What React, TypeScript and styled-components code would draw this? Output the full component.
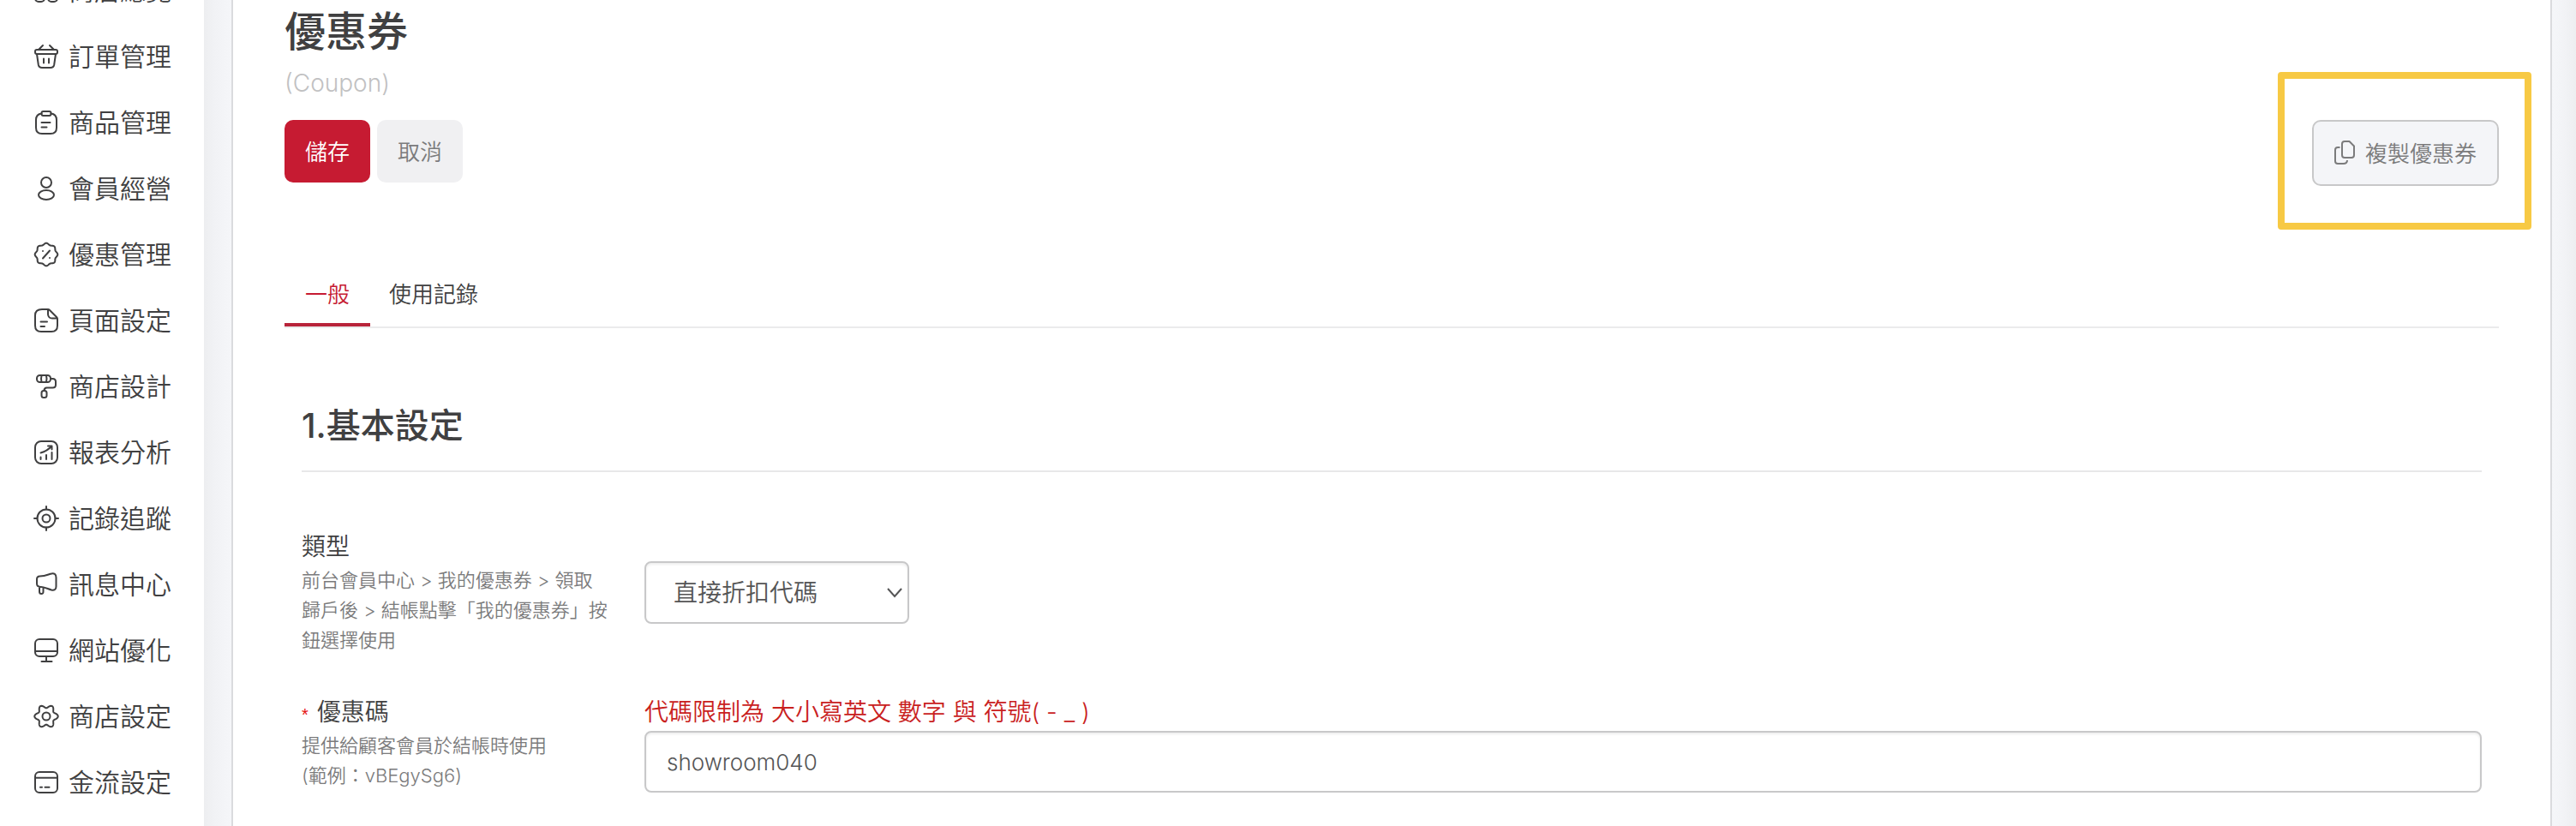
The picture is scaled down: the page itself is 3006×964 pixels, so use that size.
import React, { useState } from 'react';
import styled, { createGlobalStyle } from 'styled-components';

const color = {
  ink: '#404041',
  muted: '#7b7b7c',
  faint: '#c1c1c2',
  brand: '#c61b32',
  warn: '#c9211e',
  line: '#e8e8e9',
  field: '#c8c8c9',
  wash: '#f4f5f8',
  highlight: '#f7c944',
};

const GlobalStyle = createGlobalStyle`
  *, *::before, *::after { box-sizing: border-box; }
  body {
    margin: 0;
    background: #fff;
    color: ${color.ink};
    font-family: Inter, "Noto Sans CJK TC", sans-serif;
    font-size: 28px;
    font-weight: 350;
  }
  button, input, select { font-family: inherit; font-weight: inherit; }
`;

/* Closed wavy outline with evenly spaced lobes, centred in a 28 unit box. */
const lobed = (lobes: number, mean: number, amplitude: number) => {
  const points = Array.from({ length: 120 }, (_, i) => {
    const a = (i / 120) * Math.PI * 2;
    const r = mean + amplitude * Math.cos(lobes * a);
    return `${(14 + r * Math.cos(a)).toFixed(2)} ${(14 + r * Math.sin(a)).toFixed(2)}`;
  });
  return `M${points.join('L')}Z`;
};

const icons: Record<string, React.ReactNode> = {
  overview: (
    <>
      <rect x="1" y="1" width="11" height="11" rx="4" />
      <rect x="16" y="1" width="11" height="11" rx="4" />
      <rect x="1" y="16" width="11" height="11" rx="4" />
      <rect x="16" y="16" width="11" height="11" rx="4" />
    </>
  ),
  basket: (
    <>
      <rect x="1" y="6" width="26" height="5" rx="2" />
      <path d="M3 11l1.800 12.500Q5.500 27 9 27H19Q22.500 27 23.200 23.500L25 11M10 1L5 6M18 1L23 6M11 16.500V21.500M17 16.500V21.500" />
    </>
  ),
  clipboard: (
    <>
      <path d="M8.500 3.500C4 4 2 6 2 11V20Q2 27 9 27H19Q26 27 26 20V11C26 6 24 4 19.500 3.500" />
      <rect x="8.500" y="1" width="11" height="5" rx="2" />
      <path d="M8.500 14H18.500M8.500 19.500H14.500" />
    </>
  ),
  member: (
    <>
      <circle cx="14" cy="7" r="6" />
      <ellipse cx="14" cy="21.500" rx="9" ry="5.500" />
    </>
  ),
  discount: (
    <>
      <path d={lobed(8, 12.4, 0.9)} />
      <path d="M10 18.500L18 9.500M10 10V10.100M18 18V18.100" />
    </>
  ),
  page: (
    <path d="M16 1H9Q1 1 1 8V20Q1 27 8 27H20Q27 27 27 20V12.500Q27 11 26 10L18 2Q17 1 16 1V7Q16.500 11.500 21 11.500H27M7.500 15.500H15M7.500 21H12" />
  ),
  roller: (
    <>
      <rect x="3" y="1" width="16" height="8" rx="3.500" />
      <path d="M8.500 1.500Q7.500 5 8.500 8.500M14 1.500Q15 5 14 8.500M19 5H21.500Q25 5 25 8.500V12Q25 15.500 21.500 15.500H14.500Q11.500 15.500 11.500 19" />
      <rect x="8.500" y="19" width="6" height="8" rx="2.500" />
    </>
  ),
  report: (
    <>
      <rect x="1" y="1" width="26" height="26" rx="7" />
      <path d="M7.500 19.500V22M14 17V22M20.500 14V22M7.500 14.500Q15 12.500 20.500 6.500M16 6.500H20.500V10.500" />
    </>
  ),
  tracking: (
    <>
      <circle cx="14" cy="14" r="10.500" />
      <circle cx="14" cy="14" r="4.500" />
      <path d="M14 0V3.500M14 24.500V28M0 14H3.500M24.500 14H28" />
    </>
  ),
  message: (
    <path d="M3 8Q3 4.500 6.500 4.500C12.500 4.500 15 3 19 1.700Q25.500 0 25.500 6V16.500Q25.500 21.500 20 20.500C15 19 12 17 6.500 16.800Q3 16.500 3 13ZM6 17V22.500Q6 25 8.300 25T10.500 22.500V18" />
  ),
  website: (
    <>
      <rect x="1" y="1" width="26" height="20" rx="5" />
      <path d="M1 15H27M14 21V27M8.500 27H20.500" />
    </>
  ),
  settings: (
    <>
      <path d={lobed(6, 11.7, 2)} />
      <circle cx="14" cy="14" r="4.500" />
    </>
  ),
  payment: (
    <>
      <rect x="1" y="2" width="26" height="24" rx="5" />
      <path d="M1 8.700H27M7 19.700H9M12.500 19.700H17.500" />
    </>
  ),
};

const menu = [
  { icon: 'overview', label: '商店總覽' },
  { icon: 'basket', label: '訂單管理' },
  { icon: 'clipboard', label: '商品管理' },
  { icon: 'member', label: '會員經營' },
  { icon: 'discount', label: '優惠管理' },
  { icon: 'page', label: '頁面設定' },
  { icon: 'roller', label: '商店設計' },
  { icon: 'report', label: '報表分析' },
  { icon: 'tracking', label: '記錄追蹤' },
  { icon: 'message', label: '訊息中心' },
  { icon: 'website', label: '網站優化' },
  { icon: 'settings', label: '商店設定' },
  { icon: 'payment', label: '金流設定' },
];

const Shell = styled.div`
  display: flex;
  height: 100vh;
  overflow: hidden;
  background: ${color.wash};
`;

const Sidebar = styled.nav`
  flex: none;
  width: 238px;
  background: #fff;
`;

const MenuList = styled.ul`
  list-style: none;
  margin: -50px 0 0;
  padding: 0;
`;

const MenuLink = styled.a`
  display: flex;
  align-items: center;
  gap: 12px;
  height: 77px;
  padding-left: 40px;
  color: ${color.ink};
  font-size: 30px;
  line-height: 40px;
  text-decoration: none;
  white-space: nowrap;
`;

const MenuIcon = styled.svg`
  flex: none;
  width: 28px;
  height: 28px;
  overflow: visible;
  fill: none;
  stroke: currentColor;
  stroke-width: 2;
  stroke-linecap: round;
  stroke-linejoin: round;
`;

const Gutter = styled.div<{ $side: 'left' | 'right' }>`
  flex: none;
  width: ${(p) => (p.$side === 'left' ? 32 : 28)}px;
  background: linear-gradient(
    to ${(p) => (p.$side === 'left' ? 'right' : 'left')},
    #edeef0,
    #f1f2f5 40%,
    #f5f6f9
  );
`;

const Panel = styled.main`
  flex: 1;
  min-width: 0;
  padding: 9px 60px 0;
  background: #fff;
  border: solid #dadbde;
  border-width: 0 2px;
`;

const Title = styled.h1`
  margin: 0;
  font-size: 48px;
  font-weight: 500;
  line-height: 56px;
`;

const Subtitle = styled.p`
  margin: 14px 0 25px;
  color: ${color.faint};
  font-size: 28px;
  line-height: 36px;
`;

const Toolbar = styled.div`
  display: flex;
  align-items: flex-start;
  justify-content: space-between;
`;

const ButtonGroup = styled.div`
  display: flex;
  gap: 8px;
`;

const Button = styled.button<{ $primary?: boolean }>`
  height: 73px;
  padding: 0 24px 2px;
  border: 0;
  border-radius: 10px;
  background: ${(p) => (p.$primary ? color.brand : '#f0f0f2')};
  color: ${(p) => (p.$primary ? '#fff' : color.muted)};
  font-size: 26px;
`;

const CopyButton = styled.button`
  display: flex;
  align-items: center;
  gap: 12px;
  height: 77px;
  padding: 0 24px 2px;
  border: 2px solid ${color.field};
  border-radius: 10px;
  background: ${color.wash};
  color: ${color.muted};
  font-size: 26px;
`;

const CopyIcon = styled.svg`
  width: 24px;
  height: 28px;
  fill: none;
  stroke: currentColor;
  stroke-width: 2;
  stroke-linejoin: round;
`;

const Callout = styled.div`
  position: relative;

  &::after {
    content: '';
    position: absolute;
    inset: -56px -38px -51px -40px;
    border: 8px solid ${color.highlight};
    border-radius: 4px;
    pointer-events: none;
  }
`;

const Tabs = styled.div`
  display: flex;
  margin-top: 107px;
  border-bottom: 2px solid #ebebec;
`;

const Tab = styled.button<{ $active: boolean }>`
  min-width: 100px;
  padding: 0 22px 13px;
  border: 0;
  border-bottom: 4px solid ${(p) => (p.$active ? '#b8243a' : 'transparent')};
  background: none;
  color: ${(p) => (p.$active ? color.brand : color.ink)};
  font-size: 26px;
  line-height: 40px;
`;

const Section = styled.section`
  padding: 84px 20px 0;
`;

const SectionTitle = styled.h2`
  margin: 0 0 65px;
  padding-bottom: 22px;
  border-bottom: 2px solid ${color.line};
  font-size: 40px;
  font-weight: 500;
  line-height: 60px;
`;

const Field = styled.div`
  display: flex;
  align-items: flex-start;
  margin-bottom: 44px;
`;

const FieldText = styled.div`
  flex: none;
  width: 400px;
  padding-right: 40px;
`;

const Label = styled.label`
  display: block;
  font-size: 28px;
  line-height: 44px;
`;

const Required = styled.span`
  margin-right: 10px;
  color: #e60f0f;
  font-family: "Liberation Sans", Arial, sans-serif;
  font-size: 20px;
  line-height: 20px;
`;

const Hint = styled.p`
  margin: 0;
  color: ${color.muted};
  font-size: 22px;
  line-height: 35px;
  white-space: pre-line;
`;

const Control = styled.div<{ $offset?: boolean }>`
  flex: 1;
  min-width: 0;
  padding-top: ${(p) => (p.$offset ? 39 : 0)}px;
`;

const Notice = styled.p`
  margin: 0;
  color: ${color.warn};
  font-size: 28px;
  line-height: 44px;
`;

const SelectBox = styled.div`
  position: relative;
  width: 309px;
`;

const Select = styled.select`
  appearance: none;
  width: 100%;
  height: 73px;
  padding: 0 32px;
  border: 2px solid ${color.field};
  border-radius: 8px;
  background: #fff;
  box-shadow: inset 0 2px 3px rgba(0, 0, 0, 0.07);
  color: #555556;
  font-size: 28px;
`;

const Chevron = styled.svg`
  position: absolute;
  top: 31px;
  right: 8px;
  width: 18px;
  height: 12px;
  fill: none;
  stroke: #555556;
  stroke-width: 2;
  pointer-events: none;
`;

const TextInput = styled.input`
  display: block;
  width: 100%;
  height: 72px;
  padding: 0 24px;
  border: 2px solid ${color.field};
  border-radius: 8px;
  background: #fff;
  box-shadow: inset 0 2px 3px rgba(0, 0, 0, 0.07);
  color: #555556;
  font-size: 26px;
`;

export default function App() {
  const [tab, setTab] = useState(0);
  const [code, setCode] = useState('showroom040');

  return (
    <>
      <GlobalStyle />
      <Shell lang="zh-Hant">
        <Sidebar>
          <MenuList>
            {menu.map((item) => (
              <li key={item.label}>
                <MenuLink href="#">
                  <MenuIcon viewBox="0 0 28 28" aria-hidden="true">
                    {icons[item.icon]}
                  </MenuIcon>
                  {item.label}
                </MenuLink>
              </li>
            ))}
          </MenuList>
        </Sidebar>
        <Gutter $side="left" />
        <Panel>
          <Title>優惠券</Title>
          <Subtitle>(Coupon)</Subtitle>
          <Toolbar>
            <ButtonGroup>
              <Button type="button" $primary>
                儲存
              </Button>
              <Button type="button">取消</Button>
            </ButtonGroup>
            <Callout>
              <CopyButton type="button">
                <CopyIcon viewBox="0 0 24 28" aria-hidden="true">
                  <path d="M12 1H17.500L23 6.500V17Q23 20 20 20H12Q9 20 9 17V4Q9 1 12 1ZM6.500 8H4Q1 8 1 11V24Q1 27 4 27H10.500Q15 27 15 23" />
                </CopyIcon>
                複製優惠券
              </CopyButton>
            </Callout>
          </Toolbar>
          <Tabs role="tablist">
            {['一般', '使用記錄'].map((name, i) => (
              <Tab
                key={name}
                type="button"
                role="tab"
                aria-selected={tab === i}
                $active={tab === i}
                onClick={() => setTab(i)}
              >
                {name}
              </Tab>
            ))}
          </Tabs>
          <Section>
            <SectionTitle>1.基本設定</SectionTitle>
            <Field>
              <FieldText>
                <Label htmlFor="coupon-type">類型</Label>
                <Hint>
                  {'前台會員中心 > 我的優惠券 > 領取\n歸戶後 > 結帳點擊「我的優惠券」按\n鈕選擇使用'}
                </Hint>
              </FieldText>
              <Control $offset>
                <SelectBox>
                  <Select id="coupon-type">
                    <option>直接折扣代碼</option>
                  </Select>
                  <Chevron viewBox="0 0 18 12" aria-hidden="true">
                    <path d="M1 1L9 10L17 1" />
                  </Chevron>
                </SelectBox>
              </Control>
            </Field>
            <Field>
              <FieldText>
                <Label htmlFor="coupon-code">
                  <Required>*</Required>優惠碼
                </Label>
                <Hint>{'提供給顧客會員於結帳時使用\n(範例：vBEgySg6)'}</Hint>
              </FieldText>
              <Control>
                <Notice>代碼限制為 大小寫英文 數字 與 符號( - _ )</Notice>
                <TextInput
                  id="coupon-code"
                  type="text"
                  value={code}
                  onChange={(e) => setCode(e.target.value)}
                />
              </Control>
            </Field>
          </Section>
        </Panel>
        <Gutter $side="right" />
      </Shell>
    </>
  );
}
